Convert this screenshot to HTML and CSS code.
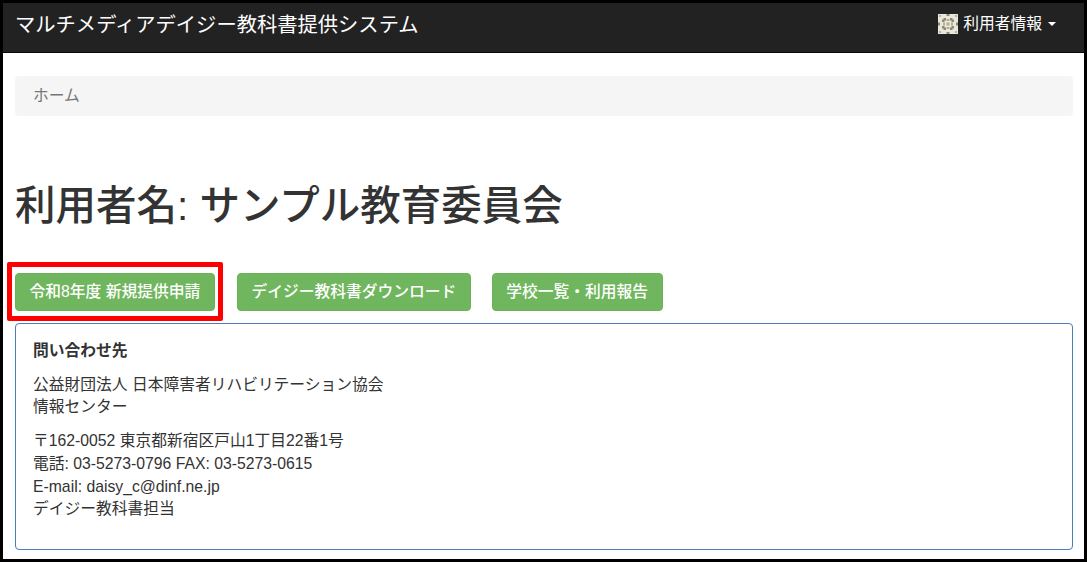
FILE: index.html
```html
<!DOCTYPE html>
<html lang="ja">
<head>
<meta charset="utf-8">
<title>マルチメディアデイジー教科書提供システム</title>
<link rel="stylesheet" href="styles.css">
</head>
<body>
<div class="frame">
  <nav class="navbar">
    <a class="brand">マルチメディアデイジー教科書提供システム</a>
    <a class="user">
      <svg class="avatar" width="20" height="20" viewBox="0 0 20 20">
        <rect width="20" height="20" fill="#eae7dc"/>
        <g fill="#8f8a6e">
          <rect x="8.500" y="0" width="3" height="2"/><rect x="8.500" y="18" width="3" height="2"/>
          <rect x="0" y="8.500" width="2" height="3"/><rect x="18" y="8.500" width="2" height="3"/>
          <rect x="5.500" y="4" width="2.500" height="2.500"/><rect x="12" y="4" width="2.500" height="2.500"/>
          <rect x="5.500" y="13.500" width="2.500" height="2.500"/><rect x="12" y="13.500" width="2.500" height="2.500"/>
          <rect x="4" y="5.500" width="2.500" height="2.500"/><rect x="13.500" y="5.500" width="2.500" height="2.500"/>
          <rect x="4" y="12" width="2.500" height="2.500"/><rect x="13.500" y="12" width="2.500" height="2.500"/>
        </g>
        <g fill="#b5b096">
          <rect x="8.500" y="5" width="3" height="2"/><rect x="8.500" y="13" width="3" height="2"/>
          <rect x="5" y="8.500" width="2" height="3"/><rect x="13" y="8.500" width="2" height="3"/>
          <rect x="8.500" y="8.500" width="3" height="3"/>
          <rect x="1" y="1" width="2" height="2"/><rect x="17" y="1" width="2" height="2"/>
          <rect x="1" y="17" width="2" height="2"/><rect x="17" y="17" width="2" height="2"/>
        </g>
      </svg>
      <span class="user-name">利用者情報</span>
      <span class="caret"></span>
    </a>
  </nav>
  <main class="content">
    <div class="breadcrumb">ホーム</div>
    <h1 class="title">利用者名: サンプル教育委員会</h1>
    <div class="actions">
      <a class="btn btn-first">令和8年度 新規提供申請<span class="highlight"></span></a>
      <a class="btn">デイジー教科書ダウンロード</a>
      <a class="btn">学校一覧・利用報告</a>
    </div>
    <section class="panel">
      <p class="panel-head">問い合わせ先</p>
      <p class="panel-text">公益財団法人 日本障害者リハビリテーション協会<br>情報センター</p>
      <p class="panel-text">〒162-0052 東京都新宿区戸山1丁目22番1号<br>電話: 03-5273-0796 FAX: 03-5273-0615<br>E-mail: daisy_c@dinf.ne.jp<br>デイジー教科書担当</p>
    </section>
  </main>
</div>
</body>
</html>
```
FILE: styles.css
```css
* { box-sizing: border-box; }
html, body { margin: 0; padding: 0; }
body {
  font-family: "Liberation Sans", "Noto Sans CJK JP", sans-serif;
  font-size: 15.75px;
  line-height: 22.7px;
  color: #333;
  background: #000;
}
.frame {
  width: 1087px;
  height: 562px;
  border: 3px solid #000;
  background: #fff;
  overflow: hidden;
}
.navbar {
  height: 50px;
  background: #222;
  border-bottom: 1px solid #080808;
  display: flex;
  align-items: center;
  justify-content: space-between;
  padding: 0 28px 6px 12px;
  color: #fff;
}
.brand { font-size: 20.3px; line-height: 30px; }
.user { display: flex; align-items: center; color: #fff; }
.avatar { display: block; margin-right: 5px; margin-top: 0; }
.caret {
  width: 0;
  height: 0;
  margin-left: 6px;
  border-top: 4px solid #fff;
  border-left: 4px solid transparent;
  border-right: 4px solid transparent;
}
.content { padding: 23px 11px 0 12px; }
.breadcrumb {
  height: 40px;
  padding: 9px 18px;
  background: #f5f5f5;
  border-radius: 4px;
  color: #777;
}
.title {
  margin: 61px 0 0;
  font-size: 40.5px;
  line-height: 58px;
  font-weight: 500;
  color: #333;
}
.actions {
  display: flex;
  gap: 21px;
  margin-top: 38px;
}
.btn {
  position: relative;
  height: 38px;
  padding: 7px 13.5px;
  background: #70b65e;
  border: 1px solid #6ab158;
  border-radius: 4px;
  color: #fff;
  font-weight: 500;
}
.btn-first { width: 200px; margin-right: 1px; white-space: nowrap; }
.highlight {
  position: absolute;
  left: -9px;
  top: -12px;
  width: 216px;
  height: 59px;
  border: 5px solid #f00;
  border-radius: 2px;
}
.panel {
  height: 227px;
  margin-top: 12px;
  padding: 16px 17px;
  border: 1px solid #4a7cb8;
  border-radius: 4px;
}
.panel p { margin: 0 0 11px; }
.panel-head { font-weight: 700; }
```
